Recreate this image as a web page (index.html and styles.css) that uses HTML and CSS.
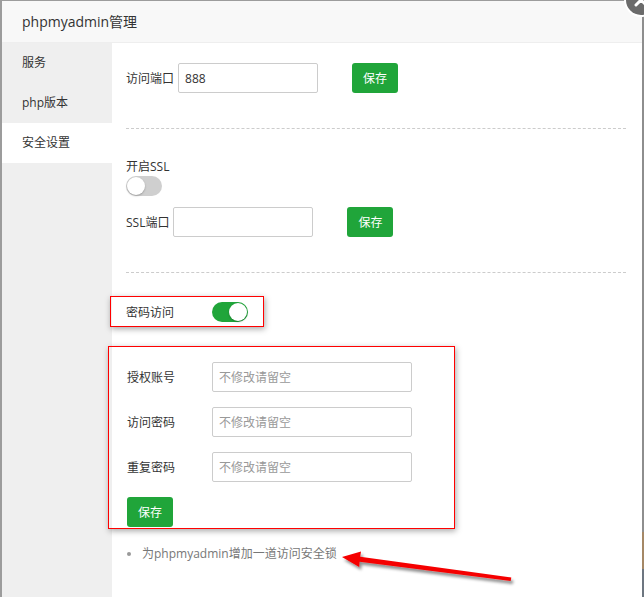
FILE: index.html
```html
<!DOCTYPE html>
<html lang="zh">
<head>
<meta charset="utf-8">
<title>phpmyadmin管理</title>
<link rel="stylesheet" href="styles.css">
</head>
<body>
<div class="dialog">
  <div class="header">phpmyadmin管理</div>
  <span class="close" aria-label="关闭">
    <svg width="30" height="30" viewBox="0 0 30 30"><path d="M10 10 L20 20 M20 10 L10 20" stroke="#fff" stroke-width="3" stroke-linecap="round"/></svg>
  </span>
  <div class="main">
    <ul class="side">
      <li class="side-item">服务</li>
      <li class="side-item">php版本</li>
      <li class="side-item active">安全设置</li>
    </ul>
    <div class="content">
      <div class="row">
        <span class="lbl">访问端口</span>
        <input class="inp" type="text" value="888">
        <button class="btn btn-gap">保存</button>
      </div>
      <div class="dash"></div>
      <div class="ssl-title">开启SSL</div>
      <span class="toggle"><span class="knob"></span></span>
      <div class="row row-ssl">
        <span class="lbl">SSL端口</span>
        <input class="inp" type="text">
        <button class="btn btn-gap">保存</button>
      </div>
      <div class="dash"></div>
      <div class="mark mark-toggle">
        <span class="lbl lbl-wide">密码访问</span>
        <span class="toggle on"><span class="knob"></span></span>
      </div>
      <div class="mark mark-form">
        <div class="frow"><span class="lbl lbl-form">授权账号</span><input class="inp inp-wide" type="text" placeholder="不修改请留空"></div>
        <div class="frow"><span class="lbl lbl-form">访问密码</span><input class="inp inp-wide" type="text" placeholder="不修改请留空"></div>
        <div class="frow"><span class="lbl lbl-form">重复密码</span><input class="inp inp-wide" type="text" placeholder="不修改请留空"></div>
        <button class="btn">保存</button>
      </div>
      <ul class="tips">
        <li>为phpmyadmin增加一道访问安全锁</li>
      </ul>
    </div>
  </div>
</div>
<svg class="arrow" width="644" height="597" viewBox="0 0 644 597">
  <defs>
    <filter id="sh" x="-10%" y="-50%" width="120%" height="200%">
      <feDropShadow dx="2" dy="3" stdDeviation="1.6" flood-color="#000" flood-opacity="0.45"/>
    </filter>
  </defs>
  <polygon filter="url(#sh)" fill="#f50000" points="342,557 361,551.6 360.2,556.8 511.3,577.4 510.7,581 359.6,561.8 359.2,567"/>
</svg>
</body>
</html>
```
FILE: styles.css
```css
html, body {
  margin: 0;
  padding: 0;
  overflow: hidden;
  height: 597px;
}
body {
  background:
    linear-gradient(to bottom, #8e8e8e 0, #8e8e8e 532px, #a58866 532px, #a58866 569px, #6d7680 569px) right top / 2px 100% no-repeat,
    #9c9c9c;
  font-family: "Open Sans", "Noto Sans CJK SC", sans-serif;
  font-size: 12px;
  color: #333;
  position: relative;
}
.dialog {
  position: relative;
  margin: 1px 0 0 2px;
  width: 640px;
  height: 596px;
  background: #fff;
}
.header {
  height: 41px;
  line-height: 41px;
  padding-left: 20px;
  font-size: 14px;
  color: #333;
  background: #f8f8f8;
  border-bottom: 1px solid #eee;
}
.close {
  position: absolute;
  right: -14px;
  top: -16px;
  width: 30px;
  height: 30px;
  border-radius: 50%;
  background: #6b6b6b;
  box-shadow: 0 0 0 2px #fff;
  display: block;
}
.close svg { display: block; }
.main {
  display: flex;
  height: 554px;
}
.side {
  list-style: none;
  margin: 0;
  padding: 0;
  width: 110px;
  background: #efefef;
  flex: none;
}
.side-item {
  height: 40px;
  line-height: 40px;
  padding-left: 20px;
  font-size: 12px;
  color: #333;
}
.side-item.active { background: #fff; }
.content {
  flex: 1;
  padding: 20px 16px 0 14px;
}
.row {
  display: flex;
  align-items: center;
  height: 30px;
}
.lbl {
  color: #333;
  margin-right: 4px;
  white-space: nowrap;
}
.inp {
  box-sizing: border-box;
  width: 140px;
  height: 30px;
  border: 1px solid #ccc;
  border-radius: 2px;
  padding: 0 6px;
  font-family: inherit;
  font-size: 12px;
  color: #333;
  outline: none;
  margin: 0;
}
.inp::placeholder { color: #999; }
.btn {
  box-sizing: border-box;
  width: 46px;
  height: 30px;
  border: none;
  border-radius: 3px;
  background: #20a53a;
  color: #fff;
  font-family: inherit;
  font-size: 12px;
  padding: 0;
  margin: 0;
}
.btn-gap { margin-left: 34px; }
.dash {
  border-top: 1px dashed #ccc;
  margin-top: 35px;
}
.ssl-title {
  margin-top: 29px;
  line-height: 18px;
  height: 18px;
}
.toggle {
  display: block;
  position: relative;
  width: 36px;
  height: 20px;
  border-radius: 10px;
  background: #cfcfcf;
}
.toggle .knob {
  position: absolute;
  left: 1px;
  top: 1px;
  width: 18px;
  height: 18px;
  border-radius: 50%;
  background: #fff;
  box-shadow: 0 1px 2px rgba(0,0,0,0.25);
}
.toggle.on { background: #20a53a; }
.toggle.on .knob { left: 17px; }
.row-ssl { margin-top: 11px; }
.mark {
  border: 1px solid #f00;
  box-shadow: 1px 2px 6px rgba(0,0,0,0.35);
  box-sizing: border-box;
}
.mark-toggle {
  display: flex;
  align-items: center;
  margin-top: 23px;
  margin-left: -16px;
  width: 154px;
  height: 31px;
  padding-left: 15px;
}
.lbl-wide {
  width: 86px;
  margin-right: 0;
}
.mark-form {
  margin-top: 19px;
  margin-left: -18px;
  width: 347px;
  padding: 15px 0 1px 18px;
}
.frow {
  display: flex;
  align-items: center;
  height: 30px;
  margin-bottom: 15px;
}
.lbl-form {
  width: 85px;
  margin-right: 0;
}
.inp-wide { width: 200px; }
.tips {
  margin: 16px 0 0 0;
  padding: 0 0 0 16px;
  color: #777;
  line-height: 18px;
}
.tips li::marker { color: #999; }
.arrow {
  position: absolute;
  left: 0;
  top: 0;
  pointer-events: none;
}
```
